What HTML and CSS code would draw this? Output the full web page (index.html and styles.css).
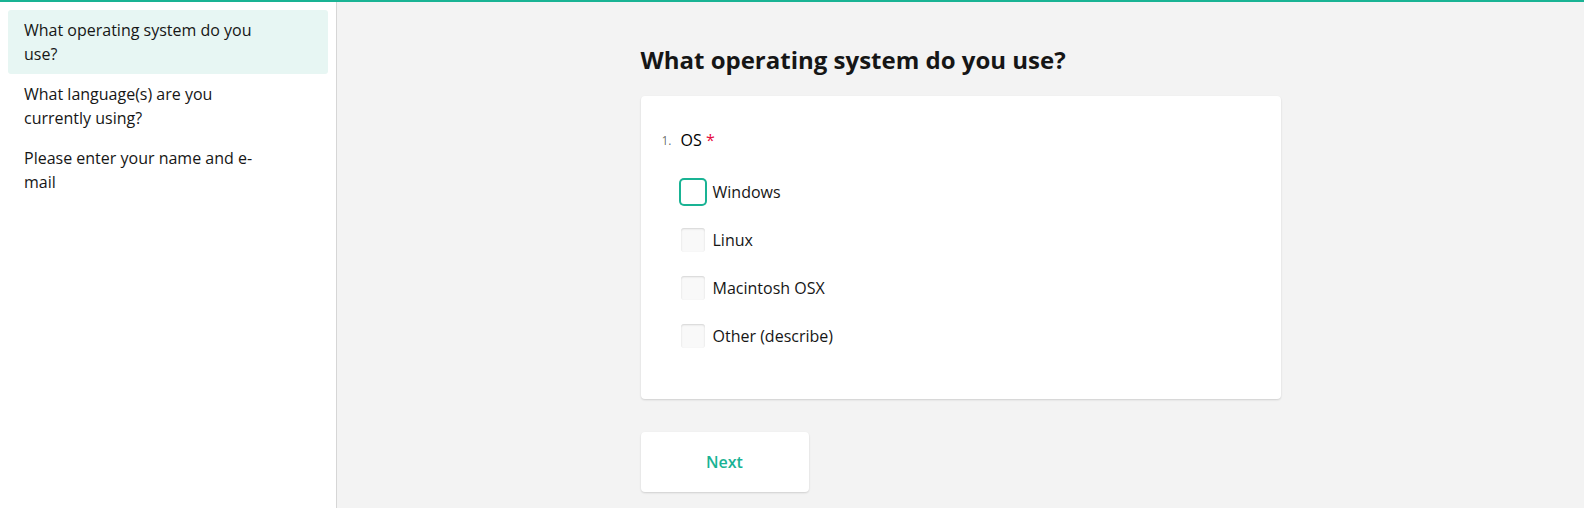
FILE: index.html
```html
<!DOCTYPE html>
<html lang="en">
<head>
<meta charset="utf-8">
<title>Survey</title>
<link rel="stylesheet" href="styles.css">
</head>
<body>
<div class="topbar"></div>
<div class="layout">
  <aside class="toc">
    <div class="toc-item active"><span class="toc-text">What operating system do you use?</span></div>
    <div class="toc-item"><span class="toc-text">What language(s) are you currently using?</span></div>
    <div class="toc-item"><span class="toc-text">Please enter your name and e-mail</span></div>
  </aside>
  <main class="main">
    <div class="page">
      <h1 class="page-title">What operating system do you use?</h1>
      <section class="panel">
        <div class="q-title"><span class="q-num">1.</span><span class="q-text">OS</span> <span class="req">*</span></div>
        <div class="choices">
          <label class="choice"><span class="box focused"></span><span class="choice-label">Windows</span></label>
          <label class="choice"><span class="box"></span><span class="choice-label">Linux</span></label>
          <label class="choice"><span class="box"></span><span class="choice-label">Macintosh OSX</span></label>
          <label class="choice"><span class="box"></span><span class="choice-label">Other (describe)</span></label>
        </div>
      </section>
      <div class="nav">
        <button class="btn-next" type="button">Next</button>
      </div>
    </div>
  </main>
</div>
</body>
</html>
```
FILE: styles.css
```css
* { box-sizing: border-box; }
html, body { margin: 0; padding: 0; height: 100%; }
body {
  font-family: "Open Sans", "Liberation Sans", sans-serif;
  font-size: 16px;
  line-height: 24px;
  color: #161616;
  background: #f3f3f3;
  overflow: hidden;
}
.topbar { height: 2px; background: #19b394; }
.layout { display: flex; height: calc(100% - 2px); }
.toc {
  width: 337px;
  flex: 0 0 337px;
  background: #fff;
  border-right: 1px solid #d6d6d6;
  padding: 8px;
}
.toc-item {
  padding: 8px 64px 8px 16px;
  border-radius: 3px;
  width: 320px;
}
.toc-item.active { background: #e7f6f3; }
.toc-text { display: block; }
.main { flex: 1; display: flex; justify-content: center; }
.page { width: 640px; padding-top: 42px; }
.page-title {
  margin: 0 0 20px;
  font-size: 24px;
  line-height: 32px;
  font-weight: 700;
  color: #161616;
}
.panel {
  background: #fff;
  border-radius: 4px;
  box-shadow: 0 1px 2px rgba(0,0,0,0.15);
  padding: 32px 40px 39px 40px;
}
.q-title { position: relative; margin-bottom: 16px; }
.q-text { font-weight: 400; color: #000; }
.q-num {
  position: absolute;
  left: -19px;
  top: 1px;
  font-size: 12px;
  color: rgba(0,0,0,0.6);
}
.req { color: #e60a3e; }
.choices { display: flex; flex-direction: column; }
.choice { display: flex; align-items: center; gap: 8px; padding: 12px 0; }
.box {
  width: 24px; height: 24px;
  border-radius: 3px;
  background: #f9f9f9;
  box-shadow: inset 0 1px 2px rgba(0,0,0,0.15);
}
.box.focused {
  background: #fff;
  box-shadow: 0 0 0 2px #19b394;
}
.nav { margin-top: 33px; }
.btn-next {
  width: 168px; height: 60px;
  border: 0;
  background: #fff;
  border-radius: 4px;
  box-shadow: 0 1px 2px rgba(0,0,0,0.15);
  font-family: "Open Sans", "Liberation Sans", sans-serif;
  font-size: 16px;
  font-weight: 600;
  color: #19b394;
}
```
